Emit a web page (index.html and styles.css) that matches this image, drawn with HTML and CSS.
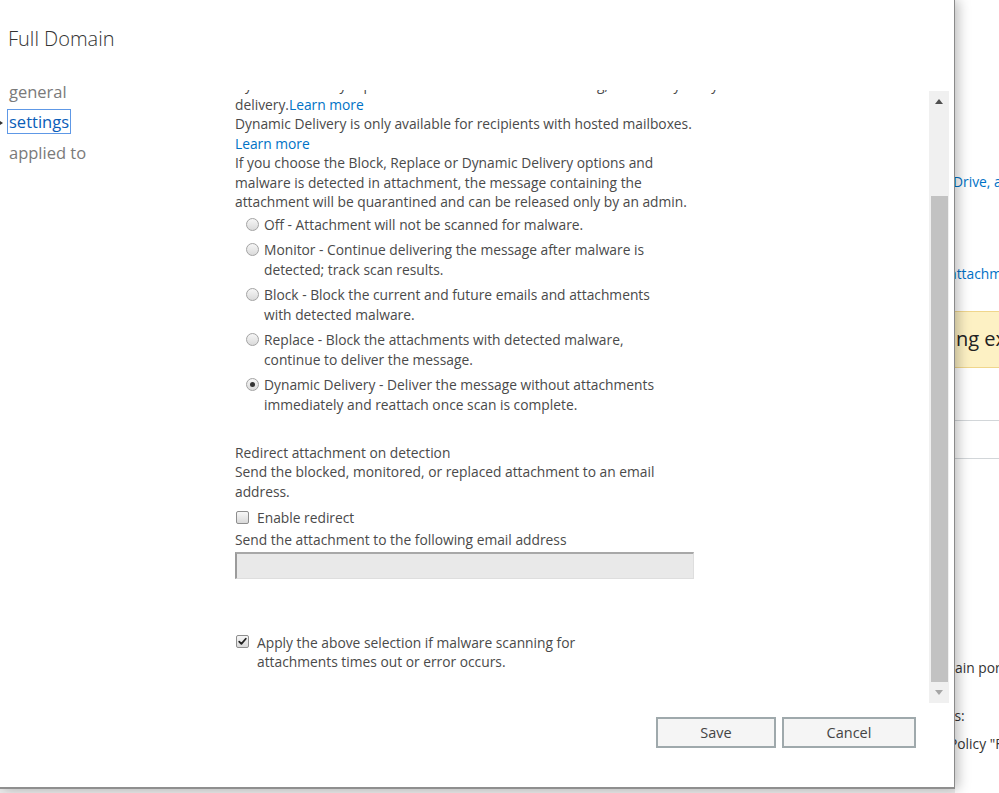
FILE: index.html
```html
<!DOCTYPE html>
<html lang="en">
<head>
<meta charset="utf-8">
<title>Full Domain</title>
<link rel="stylesheet" href="styles.css">
</head>
<body>
<div class="page">
  <div class="dialog">
    <h1 class="title">Full Domain</h1>
    <div class="main">
      <nav class="nav">
        <div class="nav-item"><span class="nav-label">general</span></div>
        <div class="nav-item active"><span class="nav-label">settings</span></div>
        <div class="nav-item"><span class="nav-label">applied to</span></div>
      </nav>
      <div class="viewport">
        <div class="content">
          <p class="para">Dynamic Delivery replaces the attachment while scanning, which may delay the<br>delivery.<a class="link" href="#">Learn more</a><br>Dynamic Delivery is only available for recipients with hosted mailboxes.<br><a class="link" href="#">Learn more</a><br>If you choose the Block, Replace or Dynamic Delivery options and<br>malware is detected in attachment, the message containing the<br>attachment will be quarantined and can be released only by an admin.</p>
          <ul class="radios">
            <li class="radio-row"><span class="radio"></span><span class="radio-label">Off - Attachment will not be scanned for malware.</span></li>
            <li class="radio-row"><span class="radio"></span><span class="radio-label">Monitor - Continue delivering the message after malware is<br>detected; track scan results.</span></li>
            <li class="radio-row"><span class="radio"></span><span class="radio-label">Block - Block the current and future emails and attachments<br>with detected malware.</span></li>
            <li class="radio-row"><span class="radio"></span><span class="radio-label">Replace - Block the attachments with detected malware,<br>continue to deliver the message.</span></li>
            <li class="radio-row"><span class="radio checked"></span><span class="radio-label">Dynamic Delivery - Deliver the message without attachments<br>immediately and reattach once scan is complete.</span></li>
          </ul>
          <div class="redirect">
            <p class="para">Redirect attachment on detection<br>Send the blocked, monitored, or replaced attachment to an email<br>address.</p>
            <div class="check-row enable"><span class="checkbox"></span><span class="check-label">Enable redirect</span></div>
            <p class="para field-label">Send the attachment to the following email address</p>
            <div class="textbox"></div>
          </div>
          <div class="check-row apply"><span class="checkbox checked"><svg viewBox="0 0 13 13" width="11" height="11"><path d="M2.6 6.6 L5.2 9.3 L10.4 3.2" fill="none" stroke="#222" stroke-width="2.1" stroke-linecap="round" stroke-linejoin="round"/></svg></span><span class="check-label">Apply the above selection if malware scanning for<br>attachments times out or error occurs.</span></div>
        </div>
      </div>
      <div class="scrollbar">
        <div class="sb-btn"><span class="arrow-up"></span></div>
        <div class="sb-space"></div>
        <div class="sb-thumb"></div>
        <div class="sb-btn down"><span class="arrow-down"></span></div>
      </div>
    </div>
    <div class="footer">
      <button class="btn save">Save</button>
      <button class="btn cancel">Cancel</button>
    </div>
  </div>
  <div class="bg">
    <div class="bg-link first">Drive, and</div>
    <div class="bg-link second">attachments</div>
    <div class="bg-alert">ng ex</div>
    <div class="bg-rule r1"></div>
    <div class="bg-rule r2"></div>
    <div class="bg-text t1">ain por</div>
    <div class="bg-text t2">ls:</div>
    <div class="bg-text t3">Policy "Full</div>
  </div>
</div>
</body>
</html>
```
FILE: styles.css
```css
* { box-sizing: border-box; }
html, body { margin: 0; padding: 0; }
body {
  background: #ececec;
  font-family: "Open Sans", "Noto Sans", sans-serif;
  color: #444;
  width: 999px;
  height: 793px;
  overflow: hidden;
}
.page {
  display: flex;
  align-items: flex-start;
  width: 999px;
  height: 793px;
}
.dialog {
  position: relative;
  z-index: 1;
  width: 955px;
  height: 789px;
  flex: none;
  background: #fff;
  border-right: 1px solid #8a8a8a;
  border-bottom: 2px solid #8f8f8f;
  box-shadow: 3px 0 12px rgba(0, 0, 0, 0.28);
  display: flex;
  flex-direction: column;
}
.title {
  margin: 0;
  height: 77px;
  padding: 25px 0 0 8px;
  font-size: 20px;
  font-weight: 300;
  line-height: 28px;
  color: #333;
}
.main {
  display: flex;
  height: 626px;
}
.nav {
  width: 235px;
  flex: none;
  margin-top: -1px;
}
.nav-item {
  position: relative;
  height: 30.5px;
  padding-left: 7px;
  display: flex;
  align-items: center;
  font-size: 16.5px;
  color: #7a7a7a;
}
.nav-label {
  display: inline-block;
  padding: 0 1px;
  border: 1px solid transparent;
  line-height: 23px;
}
.nav-item.active .nav-label {
  color: #0a5db8;
  border-color: #5e98e6;
}
.nav-item.active::before {
  content: "";
  position: absolute;
  left: 0;
  top: 14px;
  border-top: 2.5px solid transparent;
  border-bottom: 2.5px solid transparent;
  border-left: 3px solid #333;
}
.viewport {
  flex: 1;
  margin-top: 13px;
  height: 613px;
  overflow: hidden;
}
.content {
  margin-top: -15px;
  font-size: 13.8px;
  line-height: 19.5px;
  color: #4a4a4a;
  white-space: nowrap;
}
.para { margin: 0; }
.link { color: #0072c6; text-decoration: none; }
.radios {
  list-style: none;
  margin: 3px 0 0 0;
  padding: 0;
}
.radio-row {
  display: flex;
  align-items: flex-start;
  line-height: 20px;
  margin-bottom: 5px;
  padding-left: 11px;
}
.radio {
  flex: none;
  width: 13px;
  height: 13px;
  margin-top: 3.5px;
  margin-right: 5px;
  border-radius: 50%;
  border: 1px solid #a3a3a3;
  background: linear-gradient(#f6f6f6, #dadada);
  display: flex;
  align-items: center;
  justify-content: center;
}
.radio.checked::after {
  content: "";
  width: 5px;
  height: 5px;
  border-radius: 50%;
  background: #333;
}
.redirect { margin-top: 28px; }
.check-row {
  display: flex;
  align-items: flex-start;
  padding-left: 1px;
}
.check-row.enable { margin-top: 7px; line-height: 20px; }
.check-row.apply { margin-top: 54px; line-height: 19.5px; }
.checkbox {
  flex: none;
  width: 13px;
  height: 13px;
  margin-top: 3px;
  margin-right: 8px;
  border: 1px solid #8e8e8e;
  border-radius: 2px;
  background: linear-gradient(#f7f7f7, #d9d9d9);
  display: flex;
  align-items: center;
  justify-content: center;
}
.check-row.apply .checkbox { margin-top: 2px; }
.field-label { margin-top: 2px; }
.textbox {
  margin-top: 2px;
  width: 459px;
  height: 27px;
  background: #e9e9e9;
  border-top: 2px solid #a8a8a8;
  border-left: 2px solid #9b9b9b;
  border-right: 1px solid #dedede;
  border-bottom: 1px solid #dedede;
}
.scrollbar {
  flex: none;
  width: 20px;
  height: 612px;
  margin-top: 14px;
  margin-right: 5px;
  background: #f0f0f0;
  display: flex;
  flex-direction: column;
}
.sb-btn {
  height: 20px;
  display: flex;
  align-items: center;
  justify-content: center;
}
.sb-btn.down { height: 21px; }
.arrow-up {
  border-left: 4px solid transparent;
  border-right: 4px solid transparent;
  border-bottom: 5px solid #4f4f4f;
}
.arrow-down {
  border-left: 4px solid transparent;
  border-right: 4px solid transparent;
  border-top: 5px solid #a6a6a6;
}
.sb-space { height: 85px; }
.sb-thumb {
  height: 486px;
  margin: 0 1px 0 2px;
  background: #c2c2c2;
}
.footer {
  flex: 1;
  display: flex;
  justify-content: flex-end;
  align-items: flex-start;
  gap: 6px;
  padding: 14px 38px 0 0;
}
.btn {
  height: 31px;
  border: 2px solid #9fa9ac;
  background: #f5f5f5;
  font-family: "Open Sans", "Noto Sans", sans-serif;
  font-size: 14.5px;
  color: #444;
  padding: 0;
}
.btn.save { width: 120px; }
.btn.cancel { width: 134px; }
.bg {
  flex: 1;
  height: 793px;
  background: #fff;
  overflow: hidden;
  white-space: nowrap;
  font-size: 13.8px;
  color: #333;
}
.bg-link {
  color: #0072c6;
  line-height: 20px;
}
.bg-link.first { margin-top: 172px; margin-left: -2px; }
.bg-link.second { margin-top: 72px; margin-left: -6px; }
.bg-alert {
  margin-top: 27px;
  height: 57px;
  background: #fdf1c4;
  border-top: 1px solid #f0d68c;
  border-bottom: 1px solid #f0d68c;
  font-size: 20px;
  line-height: 54px;
  color: #222;
  padding-left: 1px;
}
.bg-rule { height: 1px; background: #d2d6d9; }
.bg-rule.r1 { margin-top: 52px; }
.bg-rule.r2 { margin-top: 37px; }
.bg-text { line-height: 20px; }
.bg-text.t1 { margin-top: 199px; }
.bg-text.t2 { margin-top: 28px; margin-left: -4px; }
.bg-text.t3 { margin-top: 8px; margin-left: -6px; }
```
